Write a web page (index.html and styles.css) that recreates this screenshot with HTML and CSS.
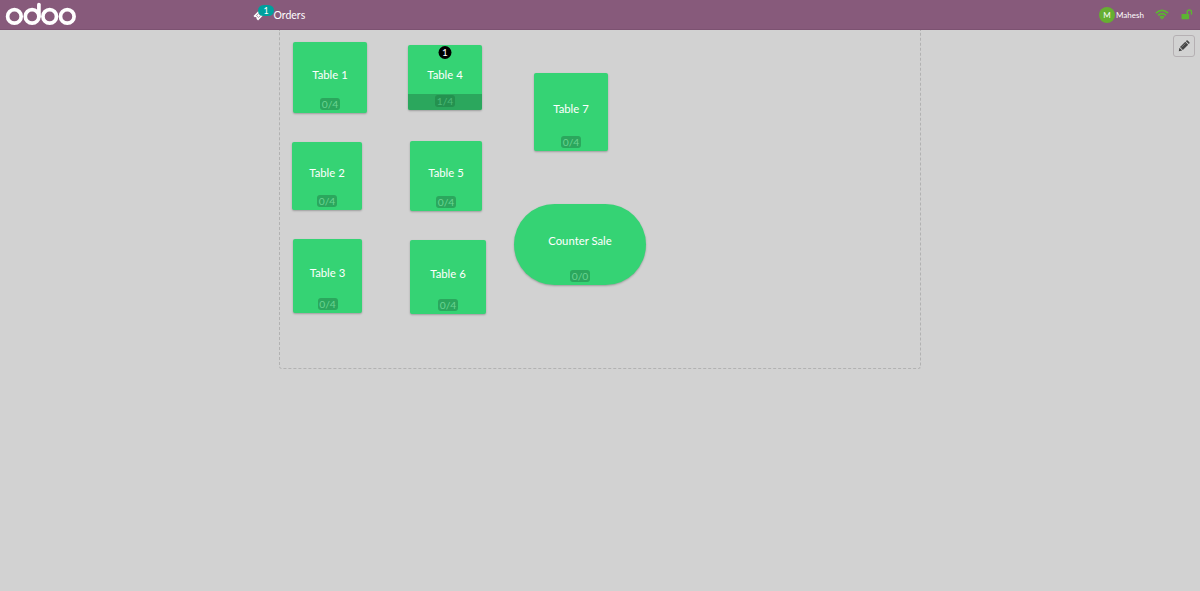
FILE: index.html
```html
<!DOCTYPE html>
<html lang="en">
<head>
<meta charset="utf-8">
<title>Odoo Point of Sale</title>
<link rel="stylesheet" href="styles.css">
</head>
<body>
<header class="topbar">
  <svg class="logo" role="img" aria-label="odoo" width="72" height="24" viewBox="0 0 72 24" fill="none" stroke="#fff" stroke-width="3.7" stroke-linecap="round">
    <circle cx="9.4" cy="14.4" r="6.8"/>
    <circle cx="27.1" cy="14.4" r="6.8"/>
    <path d="M33.9 14.4V2.6"/>
    <circle cx="44.7" cy="14.4" r="6.8"/>
    <circle cx="62.3" cy="14.4" r="6.8"/>
  </svg>
  <div class="orders">
    <svg class="ticket" width="11" height="11" viewBox="0 0 10 10">
      <path fill="#fff" fill-rule="evenodd" d="M5.4.5l1 1a1.1 1.1 0 0 0 1.5 1.5l1.6 1.6-4.9 4.9-1.5-1.5a1.1 1.1 0 0 0-1.5-1.5L.4 5.4zM5 2.9L2.9 5 5 7.1 7.1 5z"/>
      <path fill="#fff" d="M5 3.5L6.5 5 5 6.5 3.5 5z"/>
    </svg>
    <span class="orders-count">1</span>
    <span class="orders-label">Orders</span>
  </div>
  <div class="status">
    <span class="avatar">M</span>
    <span class="user">Mahesh</span>
    <svg class="wifi" width="14" height="11" viewBox="0 0 14 11" fill="none" stroke="#5cb531" stroke-width="1.7">
      <path d="M.9 4.2Q7-1.5 13.1 4.2M3 6.4Q7 2.8 11 6.4M4.9 8.5Q7 6.7 9.1 8.5"/>
      <path fill="#5cb531" stroke="none" d="M5.6 9.2Q7 8 8.4 9.2L7 10.6z"/>
    </svg>
    <svg class="lock" width="12" height="11" viewBox="0 0 12 11">
      <rect x="0.5" y="5" width="7.6" height="5.2" rx=".6" fill="#5cb531"/>
      <path d="M6.2 5.2V3.2a2.1 2.1 0 0 1 4.3 0V5.1" fill="none" stroke="#5cb531" stroke-width="1.4" stroke-linecap="round"/>
    </svg>
  </div>
</header>
<main class="floor">
  <button class="edit" aria-label="Edit">
    <svg width="12" height="12" viewBox="0 0 12 12">
      <path fill="#444" d="M.8 11.2l.6-3.4 2.8 2.8zM2 7.1L7.3 1.8l2.9 2.9L4.9 10zM7.9 1.2l.6-.6q.6-.5 1.2 0l1.7 1.7q.5.6 0 1.2l-.6.6z"/>
      <path stroke="#999" stroke-width=".6" d="M3.4 7.5l4.1-4.1"/>
    </svg>
  </button>
  <div class="map">
    <div class="table t1"><span class="name">Table 1</span><span class="seats">0/4</span></div>
    <div class="table t2"><span class="name">Table 2</span><span class="seats">0/4</span></div>
    <div class="table t3"><span class="name">Table 3</span><span class="seats">0/4</span></div>
    <div class="table t4"><span class="fill"></span><span class="order-badge">1</span><span class="name">Table 4</span><span class="seats">1/4</span></div>
    <div class="table t5"><span class="name">Table 5</span><span class="seats">0/4</span></div>
    <div class="table t6"><span class="name">Table 6</span><span class="seats">0/4</span></div>
    <div class="table t7"><span class="name">Table 7</span><span class="seats">0/4</span></div>
    <div class="table counter"><span class="name">Counter Sale</span><span class="seats">0/0</span></div>
  </div>
</main>
</body>
</html>
```
FILE: styles.css
```css
* { box-sizing: border-box; }
body {
  margin: 0;
  height: 591px;
  overflow: hidden;
  background: #d2d2d2;
  font-family: Lato, sans-serif;
  color: #fff;
}
.topbar {
  display: flex;
  align-items: center;
  height: 30px;
  padding-left: 5px;
  padding-right: 7px;
  background: #875a7b;
  border-bottom: 1px solid #7c5271;
}
.logo { margin-top: -1px; }
.orders { display: flex; align-items: center; margin-left: 176px; }
.ticket { margin-top: 1px; }
.orders-count {
  width: 16px;
  height: 11px;
  margin: -8px 0 0 -6px;
  border-radius: 5.5px;
  background: #00a09d;
  font-size: 9px;
  line-height: 11px;
  text-align: center;
}
.orders-label { margin-left: -.5px; padding-top: 1px; font-size: 10.5px; line-height: 14px; }
.status { display: flex; align-items: center; margin-left: auto; }
.avatar {
  width: 16px;
  height: 16px;
  margin-top: 1px;
  border-radius: 50%;
  background: #66af31;
  font-size: 8px;
  line-height: 16px;
  text-align: center;
}
.user { margin-left: 1px; width: 39px; font-size: 8px; line-height: 12px; }
.wifi { margin-top: -1px; }
.lock { margin-left: 12px; }
.floor { position: relative; }
.edit {
  position: absolute;
  top: 5px;
  right: 5px;
  display: grid;
  place-items: center;
  width: 22px;
  height: 22px;
  padding: 0;
  border: 1px solid #b5b0b3;
  border-radius: 3px;
  background: transparent;
}
.map {
  position: relative;
  width: 642px;
  height: 339px;
  margin: 0 auto;
  border: 1px dashed #b2b2b2;
  border-top: 0;
  border-radius: 0 0 3px 3px;
}
.table {
  position: absolute;
  display: grid;
  place-items: center;
  border-radius: 2px;
  background: #35d374;
  box-shadow: 0 1px 2px rgba(0, 0, 0, .25);
}
.name { position: relative; font-size: 11.3px; line-height: 16px; white-space: nowrap; top: -3px; }
.seats {
  position: absolute;
  bottom: 3px;
  left: 50%;
  width: 20px;
  height: 12px;
  transform: translateX(-50%);
  border-radius: 3px;
  background: #2ba75d;
  color: #6ad492;
  font-size: 10.3px;
  line-height: 13px;
  text-align: center;
}
.t1 { left: 13px; top: 12px; width: 74px; height: 71px; }
.t2 { left: 12px; top: 112px; width: 70px; height: 68px; }
.t3 { left: 13px; top: 209px; width: 69px; height: 74px; }
.t4 { left: 128px; top: 15px; width: 74px; height: 65px; }
.t5 { left: 130px; top: 111px; width: 72px; height: 70px; }
.t6 { left: 130px; top: 210px; width: 76px; height: 74px; }
.t7 { left: 254px; top: 43px; width: 74px; height: 78px; }
.counter { left: 234px; top: 174px; width: 132px; height: 81px; border-radius: 41px; }
.counter .name { top: -3.5px; }
.fill {
  position: absolute;
  left: 0;
  right: 0;
  bottom: 0;
  height: 16px;
  border-radius: 0 0 2px 2px;
  background: #2ba75d;
}
.t4 .name { top: -2.5px; }
.t4 .seats { background: #24914f; color: #4bb878; }
.order-badge {
  position: absolute;
  top: 1px;
  left: 50%;
  width: 13px;
  height: 13px;
  transform: translateX(-50%);
  border-radius: 50%;
  background: #000;
  font-size: 10px;
  line-height: 13px;
  text-align: center;
}
```
